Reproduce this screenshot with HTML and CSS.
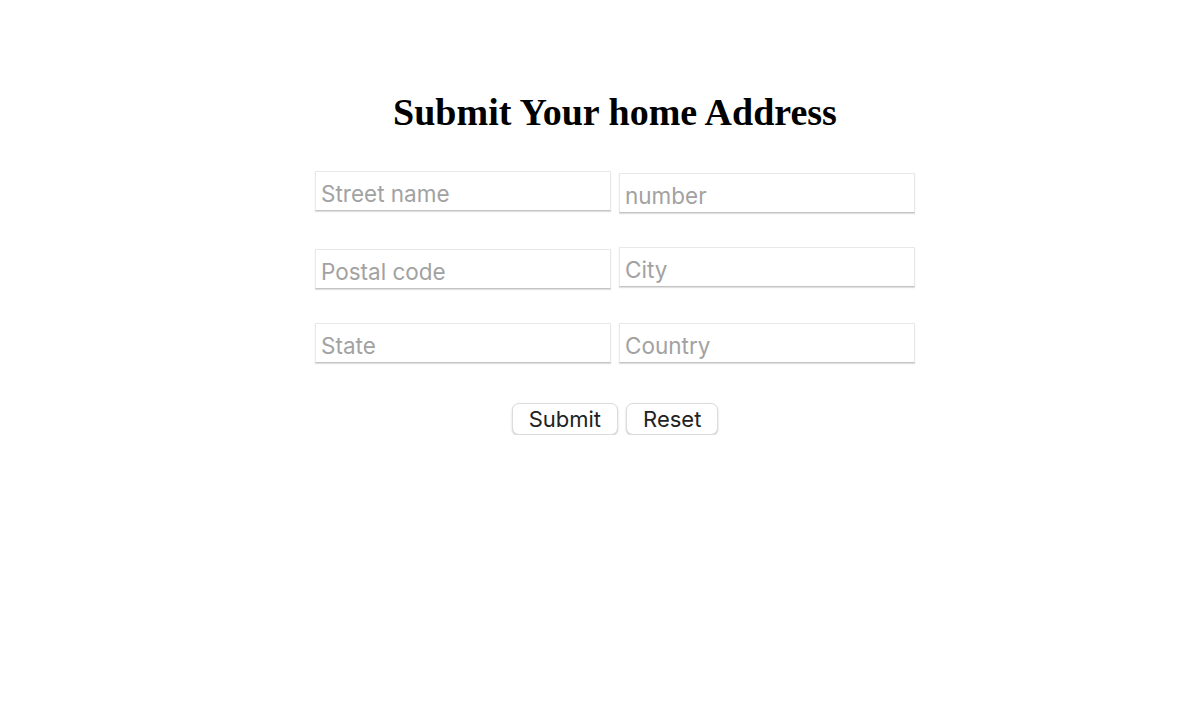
FILE: index.html
```html
<!DOCTYPE html>
<html>
<head>
<meta charset="utf-8">
<link rel="stylesheet" href="styles.css">
</head>
<body>
<main class="page">
  <h1 class="title">Submit Your home Address</h1>
  <form class="form">
    <div class="row">
      <input class="field up" type="text" placeholder="Street name">
      <input class="field down" type="text" placeholder="number">
    </div>
    <div class="row">
      <input class="field down" type="text" placeholder="Postal code">
      <input class="field up" type="text" placeholder="City">
    </div>
    <div class="row">
      <input class="field" type="text" placeholder="State">
      <input class="field" type="text" placeholder="Country">
    </div>
    <div class="actions">
      <button class="btn" type="submit">Submit</button>
      <button class="btn" type="reset">Reset</button>
    </div>
  </form>
</main>
</body>
</html>
```

FILE: styles.css
```css
html, body {
  margin: 0;
  padding: 0;
  background: #ffffff;
}

.page {
  display: flex;
  flex-direction: column;
  align-items: center;
  padding-top: 88px;
  padding-left: 26px;
}

.title {
  margin: 0;
  font-family: "Liberation Serif", "Times New Roman", serif;
  font-weight: bold;
  font-size: 38px;
  line-height: 48px;
  color: #000;
}

.form {
  margin-top: 35px;
  width: 600px;
  display: flex;
  flex-direction: column;
}

.row {
  display: flex;
  gap: 8px;
  height: 42px;
  align-items: flex-start;
  margin-bottom: 34px;
}

.field {
  box-sizing: border-box;
  width: 296px;
  height: 40px;
  margin: 0;
  padding: 4px 5px 0 5px;
  border: 1px solid #e8e8e8;
  border-bottom: 1px solid #c4c4c4;
  box-shadow: 0 1px 1px rgba(0, 0, 0, 0.12);
  border-radius: 0;
  font-family: Inter, "Liberation Sans", Arial, sans-serif;
  font-size: 22.5px;
  color: #222;
  background: #fff;
  outline: none;
}

.field.up {
  margin-top: 0;
}

.field.down {
  margin-top: 2px;
}

.field::placeholder {
  color: #a2a2a2;
}

.actions {
  display: flex;
  justify-content: center;
  gap: 8px;
  margin-top: 4px;
}

.btn {
  box-sizing: border-box;
  height: 32px;
  padding: 0 16px;
  border: 1px solid #dcdcdc;
  border-radius: 7px;
  background: #fff;
  box-shadow: 0 1px 2px rgba(0, 0, 0, 0.22);
  font-family: Inter, "Liberation Sans", Arial, sans-serif;
  font-size: 22px;
  color: #222;
  cursor: pointer;
}
```
